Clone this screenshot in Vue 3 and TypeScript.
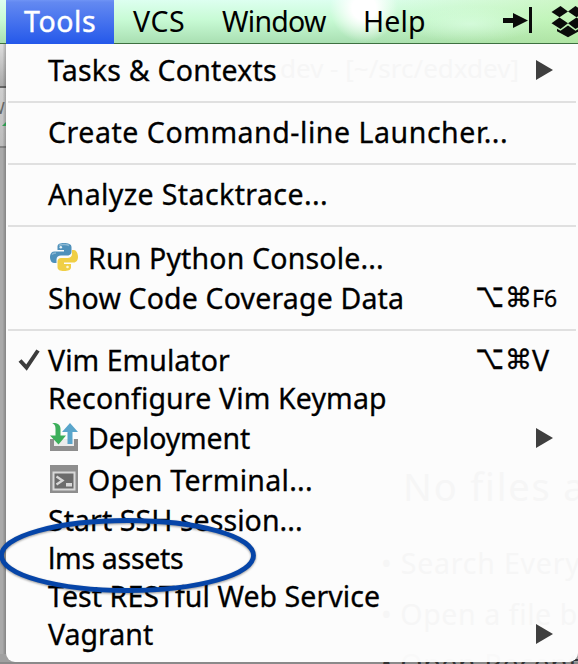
<script setup lang="ts">
type Icon = 'python' | 'deploy' | 'terminal'

interface Entry {
  label: string
  inkWidth: number
  icon?: Icon
  checked?: boolean
  submenu?: boolean
  key?: string
  small?: boolean
}

const bar = [
  { label: 'Tools', inkWidth: 71, cls: 'tools' },
  { label: 'VCS', inkWidth: 51, cls: 'vcs' },
  { label: 'Window', inkWidth: 105, cls: 'window' },
  { label: 'Help', inkWidth: 59, cls: 'help' },
]

const groups: Entry[][] = [
  [{ label: 'Tasks & Contexts', inkWidth: 228, submenu: true }],
  [{ label: 'Create Command-line Launcher...', inkWidth: 457 }],
  [{ label: 'Analyze Stacktrace...', inkWidth: 278 }],
  [
    { label: 'Run Python Console...', inkWidth: 292, icon: 'python' },
    { label: 'Show Code Coverage Data', inkWidth: 353, key: 'F6', small: true },
  ],
  [
    { label: 'Vim Emulator', inkWidth: 182, checked: true, key: 'V' },
    { label: 'Reconfigure Vim Keymap', inkWidth: 335 },
    { label: 'Deployment', inkWidth: 160, icon: 'deploy', submenu: true },
    { label: 'Open Terminal...', inkWidth: 222, icon: 'terminal' },
    { label: 'Start SSH session...', inkWidth: 252 },
    { label: 'lms assets', inkWidth: 133 },
    { label: 'Test RESTful Web Service', inkWidth: 331 },
    { label: 'Vagrant', inkWidth: 105, submenu: true },
  ],
]

const ctx = document.createElement('canvas').getContext('2d')!

// Letter spacing that makes the drawn glyphs span the given width.
function tracking(label: string, inkWidth: number): string {
  ctx.font = '28.5px "Noto Sans"'
  const m = ctx.measureText(label)
  const natural = m.actualBoundingBoxRight + m.actualBoundingBoxLeft
  return ((inkWidth - natural) / (label.length - 1)).toFixed(3) + 'px'
}
</script>

<template>
  <div class="screen">
    <header class="menubar">
      <span
        v-for="b in bar"
        :key="b.label"
        class="title"
        :class="b.cls"
        :style="{ letterSpacing: tracking(b.label, b.inkWidth) }"
      >{{ b.label }}</span>
      <svg class="status" width="80" height="43" viewBox="498 0 80 43">
        <path d="M503 18h10v-5l15 7.500-15 7.500v-5h-10z" fill="#0a0a0a" />
        <path d="M529 7h3v26h-3z" fill="#0a0a0a" />
        <g fill="#0a0a0a">
          <path d="M560.500 6l7.500 5.500-8.500 5.800-8-5.300z" />
          <path d="M575.500 6l-7.500 5.500 8.500 5.800 8-5.300z" />
          <path d="M559.500 17.500l8.500 5.800-7.500 5.700-9-5.700z" />
          <path d="M576.500 17.500l-8.500 5.800 7.500 5.700 9-5.700z" />
          <path d="M568 25.500l7.500 5.300 3.500-2v2.500l-11 6-11-6v-2.500l3.500 2z" />
        </g>
      </svg>
    </header>

    <div class="body">
      <div class="behind">
        <span class="frag">W</span>
        <i class="green"></i>
      </div>
      <div class="under"><span>• Open Recent</span></div>
      <nav class="menu">
        <div class="ghosts">
          <span class="ghost g0">dev - [~/src/edxdev]</span>
          <span class="ghost g1">No files a</span>
          <span class="ghost g2">• Search Every</span>
          <span class="ghost g3">• Open a file b</span>
        </div>
        <template v-for="(group, gi) in groups" :key="gi">
          <div v-if="gi > 0" class="sep"></div>
          <div v-for="item in group" :key="item.label" class="row" :class="{ tall: item.icon }">
            <span class="mark">
              <svg v-if="item.checked" width="22" height="22" viewBox="0 0 22 22">
                <path d="M2 11.500l6.500 7L20 1.500" fill="none" stroke="#3c3c3c" stroke-width="4" />
              </svg>
            </span>
            <svg v-if="item.icon === 'python'" class="icon" width="28" height="28" viewBox="0 0 28 28">
              <path d="M14 0c-4 0-6.500 1-6.500 3.500V7H14v1.500H4.500C1.500 8.500 0 11 0 14s1.500 6 4 6h2.500v-3.500c0-2.500 2-4 4.500-4h6.500c2 0 4-1.500 4-3.500V4c0-3-3.500-4-7.500-4z" fill="#4f91bb" />
              <path d="M14 28c4 0 7-1 7-3.500V21h-7v-1.500h9.500c3 0 4.500-2.500 4.500-5.500s-1.500-7-4-7H22v4c0 2.500-2 4-4.500 4H11c-2 0-3.500 1.500-3.500 3.500V24c0 3 2.500 4 6.500 4z" fill="#f0cf45" />
              <path d="M9 2.500c2-1.300 8-1.300 10 0M2 11.500c1-1.500 2-1.500 4-1.500" fill="none" stroke="#8bb8d3" stroke-width="1.500" />
              <circle cx="10.800" cy="4.200" r="1.300" fill="#e8f2f7" />
              <circle cx="17.500" cy="24" r="1.300" fill="#fdf6d5" />
            </svg>
            <svg v-else-if="item.icon === 'deploy'" class="icon" width="28" height="28" viewBox="0 0 28 28">
              <path d="M0 16h4v7h20v-7h4v12H0z" fill="#8e8e8e" />
              <path d="M4 16h20v7H4z" fill="#ececec" />
              <path d="M2 0c6-.5 8.500 2 8.500 6v6.500H16L8.500 21.500 0 12.500h5.500V6C5.500 3 5 1.500 2 0z" fill="#3caf5b" />
              <path d="M20 0l8 9h-5.500v12h-5V9H12z" fill="#59a5cb" />
            </svg>
            <svg v-else-if="item.icon === 'terminal'" class="icon" width="28" height="28" viewBox="0 0 28 28">
              <path d="M0 0h28v28H0z" fill="#8e8e8e" />
              <path d="M2.500 6.500h23v19h-23z" fill="#d8d8d8" />
              <path d="M4.500 8.500h19v15h-19z" fill="#6c6c6c" />
              <path d="M6.500 11.500l6 4-6 4" fill="none" stroke="#d8d8d8" stroke-width="2.300" />
              <path d="M16 18h6v3.500h-6z" fill="#d8d8d8" />
            </svg>
            <span class="label" :style="{ letterSpacing: tracking(item.label, item.inkWidth) }">{{ item.label }}</span>
            <span v-if="item.key" class="shortcut">
              <span class="opt">⌥</span><span class="cmd">⌘</span><span class="key" :class="{ small: item.small }">{{ item.key }}</span>
            </span>
            <svg v-if="item.submenu" class="arrow" width="17" height="20" viewBox="0 0 17 20">
              <path d="M0 0l17 10L0 20z" fill="#3f3f3f" />
            </svg>
          </div>
        </template>
      </nav>
    </div>

    <svg class="ring" width="262" height="90" viewBox="-2 512 262 90">
      <ellipse cx="127.500" cy="555.500" rx="126" ry="35" fill="none" stroke="#0645a8" stroke-width="4.800" />
    </svg>
  </div>
</template>

<style>
body {
  margin: 0;
}
</style>

<style scoped>
.screen {
  position: relative;
  width: 578px;
  height: 664px;
  overflow: hidden;
  font-family: "Noto Sans", "Open Sans", sans-serif;
  font-size: 28.5px;
  color: #000;
}

.menubar {
  box-sizing: border-box;
  display: flex;
  height: 44px;
  padding-left: 6px;
  border-bottom: 1px solid #3d7040;
  background:
    radial-gradient(ellipse 34px 34px at 364px 8px, #fff 35%, rgba(255, 255, 255, 0) 100%),
    radial-gradient(ellipse 70px 18px at 470px 24px, rgba(225, 255, 235, 0.6), rgba(225, 255, 235, 0)),
    linear-gradient(90deg, rgba(190, 240, 160, 0) 60%, rgba(185, 235, 145, 0.45) 100%),
    linear-gradient(#ddfff0 0, #c8fbd5 45%, #a9dfb2 100%);
}

.title {
  box-sizing: border-box;
  flex: none;
  line-height: 43px;
  white-space: nowrap;
}

.tools {
  width: 108px;
  height: 44px;
  padding-left: 18px;
  color: #fff;
  background: linear-gradient(#6f94f5 0, #6389f1 5%, #2458ea 100%);
  -webkit-text-stroke: 0.4px #fff;
}

.vcs {
  width: 108px;
  padding-left: 19px;
}

.window {
  width: 141px;
}

.help {
  width: 132px;
}

.status {
  flex: none;
  margin-left: auto;
}

.body {
  position: relative;
  height: 620px;
  padding-left: 6px;
  background: #a8a8a8;
}

.behind {
  position: absolute;
  left: 0;
  top: 0;
  width: 6px;
  height: 620px;
  overflow: hidden;
  background:
    linear-gradient(90deg, rgba(0, 0, 0, 0) 40%, rgba(0, 0, 0, 0.22)),
    linear-gradient(#dedede 0, #aaa 42px, #666 42px, #666 44px, #cfcfcf 44px, #bcbcbc 102px, #858585 102px, #858585 104px, #aaa 104px);
}

.frag {
  position: absolute;
  left: -11px;
  top: 54px;
  font-size: 17px;
  line-height: 20px;
  color: #666;
}

.green {
  position: absolute;
  left: 2px;
  top: 78px;
  border-left: 4px solid transparent;
  border-bottom: 4px solid #2f9a50;
}

.under {
  position: absolute;
  left: 0;
  bottom: 0;
  width: 578px;
  height: 10px;
  background: linear-gradient(#a0a0a0 80%, #8a8a8a 80%);
}

.under span {
  position: absolute;
  left: 381px;
  top: -10px;
  line-height: 40px;
  letter-spacing: 0.6px;
  white-space: nowrap;
  color: #333;
}

.menu {
  position: relative;
  box-sizing: border-box;
  width: 572px;
  height: 618px;
  padding: 7px 0 9px;
  border-radius: 0 0 9px 9px;
  background: rgba(254, 254, 254, 0.975);
  overflow: hidden;
}

.ghosts {
  position: absolute;
  inset: 0;
  color: #f6f6f6;
}

.ghost {
  position: absolute;
  white-space: nowrap;
  line-height: 40px;
}

.g0 {
  left: 274px;
  top: 4px;
  font-size: 26px;
}

.g1 {
  left: 397px;
  top: 422px;
  font-size: 38px;
  letter-spacing: 1.8px;
}

.g2 {
  left: 375px;
  top: 499px;
  letter-spacing: 0.8px;
}

.g3 {
  left: 375px;
  top: 550px;
  letter-spacing: 0.6px;
}

.sep {
  position: relative;
  height: 2px;
  margin: 12px 2px 10px;
  background: #e0e0e0;
}

.row {
  position: relative;
  display: flex;
  align-items: center;
  height: 38px;
  padding-right: 25px;
}

.tall {
  height: 42px;
}

.mark {
  display: flex;
  flex: none;
  width: 30px;
  padding-left: 12px;
}

.icon {
  flex: none;
  margin: 0 10px 2px 2px;
}

.label {
  line-height: 38px;
  white-space: nowrap;
  -webkit-text-stroke: 0.3px #000;
}

.shortcut {
  display: flex;
  align-items: center;
  width: 78px;
  margin-left: auto;
  line-height: 38px;
  -webkit-text-stroke: 0.3px #000;
}

.opt,
.cmd {
  flex: none;
  font-family: "DejaVu Sans", sans-serif;
  font-size: 27px;
}

.opt {
  width: 30px;
  transform: translate(-1px, -2px) scale(0.92, 1.25);
}

.cmd {
  width: 27px;
}

.small {
  font-size: 23px;
}

.arrow {
  margin-left: auto;
}

.ring {
  position: absolute;
  left: -2px;
  top: 512px;
  filter: drop-shadow(0 1px 1px rgba(0, 0, 0, 0.4));
}
</style>
